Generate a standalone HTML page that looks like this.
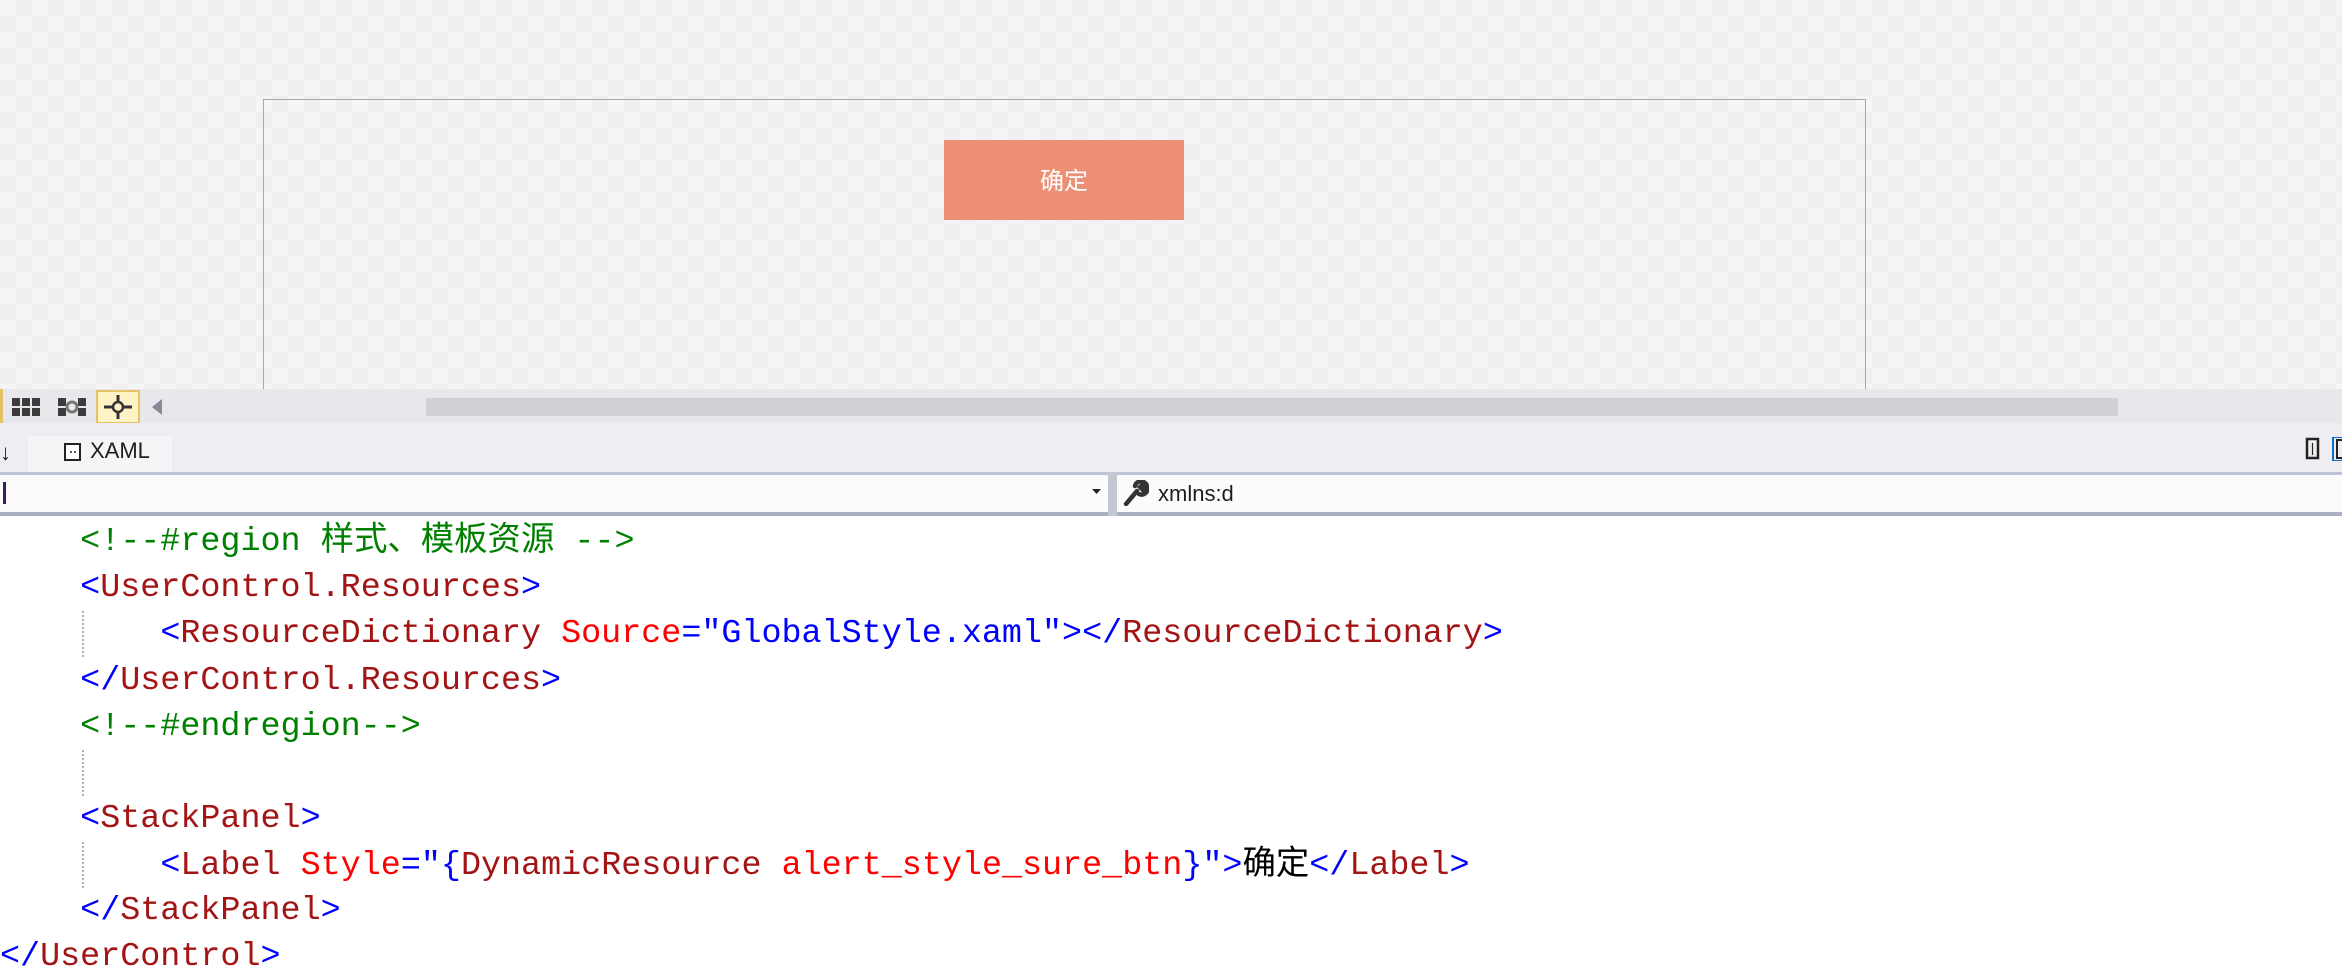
<!DOCTYPE html>
<html><head><meta charset="utf-8"><style>
*{margin:0;padding:0;box-sizing:border-box}
body{width:2342px;height:972px;overflow:hidden;background:#fff;position:relative;font-family:"Liberation Sans","Noto Sans CJK SC",sans-serif}
.abs{position:absolute}
#design{left:0;top:0;width:2342px;height:389px;background-color:#f5f5f5;background-image:linear-gradient(45deg,#efefef 25%,transparent 25%,transparent 75%,#efefef 75%),linear-gradient(45deg,#efefef 25%,transparent 25%,transparent 75%,#efefef 75%);background-size:32px 32px;background-position:0 0,16px 16px}
#frame{left:263px;top:99px;width:1603px;height:300px;border:1px solid #a8a8a8;border-bottom:none}
#btn{left:944px;top:140px;width:240px;height:80px;background:#ed8f74;color:#fff;font-size:24px;text-align:center;line-height:84px}
#tb{left:0;top:389px;width:2342px;height:34px;background:#e7e7ec}
#thumb{left:426px;top:398px;width:1692px;height:18px;background:#d0d1d6}
#tabrow{left:0;top:423px;width:2342px;height:49px;background:#eeeef2}
#tab{left:28px;top:436px;width:144px;height:36px;background:#f5f5f7;font-size:22px;color:#1e1e1e}
#line1{left:0;top:472px;width:2342px;height:3px;background:#bcc3d3}
#drop{left:0;top:475px;width:2342px;height:37px;background:#fbfbfb}
#line2{left:0;top:512px;width:2342px;height:4px;background:#a9b1c2}
#div{left:1108px;top:472px;width:9px;height:44px;background:#c2c7d2}
.code{font-family:"Liberation Mono","Noto Sans CJK SC",monospace;font-size:33.4px;white-space:pre;line-height:46px;height:46px;left:0}
.b{color:#0000ff}.m{color:#a31515}.r{color:#ff0000}.g{color:#008000}.k{color:#000}
.guide{left:82px;width:0;border-left:2px dotted #b0b0b0}
</style></head><body>
<div id="design" class="abs"></div>
<div id="frame" class="abs"></div>
<div id="btn" class="abs">确定</div>
<div id="tb" class="abs"></div>
<div class="abs" style="left:0;top:389px;width:3px;height:34px;background:#e5c365"></div>
<svg class="abs" style="left:12px;top:398px" width="28" height="18"><g fill="#3c3c3c"><rect x="0" y="0" width="8" height="8"/><rect x="10" y="0" width="8" height="8"/><rect x="20" y="0" width="8" height="8"/><rect x="0" y="10" width="8" height="8"/><rect x="10" y="10" width="8" height="8"/><rect x="20" y="10" width="8" height="8"/></g></svg>
<svg class="abs" style="left:58px;top:398px" width="28" height="18"><g fill="#3c3c3c"><rect x="0" y="0" width="8" height="8"/><rect x="20" y="0" width="8" height="8"/><rect x="0" y="10" width="8" height="8"/><rect x="20" y="10" width="8" height="8"/></g><circle cx="14" cy="9" r="5" fill="none" stroke="#777" stroke-width="3"/></svg>
<div class="abs" style="left:96px;top:390px;width:44px;height:34px;background:#fff2c4;border:2px solid #e5c365"></div>
<svg class="abs" style="left:100px;top:393px" width="36" height="28"><path d="M18 2V26M4 14H32" stroke="#333" stroke-width="3"/><circle cx="18" cy="14" r="5" fill="#fff2c4" stroke="#333" stroke-width="2.5"/></svg>
<svg class="abs" style="left:152px;top:399px" width="10" height="16"><path d="M10 0L0 8L10 16Z" fill="#868999"/></svg>
<div id="thumb" class="abs"></div>
<div id="tabrow" class="abs"></div>
<div class="abs" style="left:0;top:440px;font-size:22px;color:#1e1e1e">↓</div>
<div id="tab" class="abs"></div>
<svg class="abs" style="left:64px;top:443px" width="18" height="18"><rect x="1" y="1" width="15" height="16" fill="#fff" stroke="#222" stroke-width="2"/><path d="M6 9h2M10 9h2" stroke="#222" stroke-width="1.5"/></svg>
<div class="abs" style="left:90px;top:438px;font-size:22px;color:#1e1e1e">XAML</div>
<svg class="abs" style="left:2305px;top:437px" width="37" height="24"><rect x="2" y="2" width="11" height="19" fill="none" stroke="#222" stroke-width="2.5"/><path d="M7.5 6v12" stroke="#222" stroke-width="1.2"/><rect x="28" y="0" width="10" height="24" fill="none" stroke="#0a72c8" stroke-width="2"/><rect x="32" y="3" width="8" height="18" fill="none" stroke="#222" stroke-width="2"/></svg>
<div id="line1" class="abs"></div>
<div id="drop" class="abs"></div>
<div class="abs" style="left:3px;top:482px;width:3px;height:22px;background:#3a1c5c"></div>
<svg class="abs" style="left:1092px;top:489px" width="10" height="6"><path d="M0 0H9L4.5 5Z" fill="#222"/></svg>
<div id="line2" class="abs"></div>
<div id="div" class="abs"></div>
<svg class="abs" style="left:1123px;top:480px" width="26" height="26"><path d="M3 24L14 11M12 6a6 6 0 0 1 10-3l-5 4 3 3 4-4a6 6 0 0 1-8 8" stroke="#333" stroke-width="4.5" fill="none" stroke-linecap="round"/></svg>
<div class="abs" style="left:1158px;top:481px;font-size:22px;color:#1e1e1e">xmlns:d</div>

<div class="abs guide" style="top:611px;height:46px"></div>
<div class="abs guide" style="top:750px;height:46px"></div>
<div class="abs guide" style="top:842px;height:46px"></div>

<div class="abs code" style="top:519px">    <span class="g">&lt;!--#region 样式、模板资源 --&gt;</span></div>
<div class="abs code" style="top:565px">    <span class="b">&lt;</span><span class="m">UserControl.Resources</span><span class="b">&gt;</span></div>
<div class="abs code" style="top:611px">        <span class="b">&lt;</span><span class="m">ResourceDictionary</span> <span class="r">Source</span><span class="b">="GlobalStyle.xaml"&gt;&lt;/</span><span class="m">ResourceDictionary</span><span class="b">&gt;</span></div>
<div class="abs code" style="top:658px">    <span class="b">&lt;/</span><span class="m">UserControl.Resources</span><span class="b">&gt;</span></div>
<div class="abs code" style="top:704px">    <span class="g">&lt;!--#endregion--&gt;</span></div>
<div class="abs code" style="top:796px">    <span class="b">&lt;</span><span class="m">StackPanel</span><span class="b">&gt;</span></div>
<div class="abs code" style="top:843px">        <span class="b">&lt;</span><span class="m">Label</span> <span class="r">Style</span><span class="b">="{</span><span class="m">DynamicResource</span> <span class="r">alert_style_sure_btn</span><span class="b">}"&gt;</span><span class="k">确定</span><span class="b">&lt;/</span><span class="m">Label</span><span class="b">&gt;</span></div>
<div class="abs code" style="top:888px">    <span class="b">&lt;/</span><span class="m">StackPanel</span><span class="b">&gt;</span></div>
<div class="abs code" style="top:934px"><span class="b">&lt;/</span><span class="m">UserControl</span><span class="b">&gt;</span></div>
</body></html>
